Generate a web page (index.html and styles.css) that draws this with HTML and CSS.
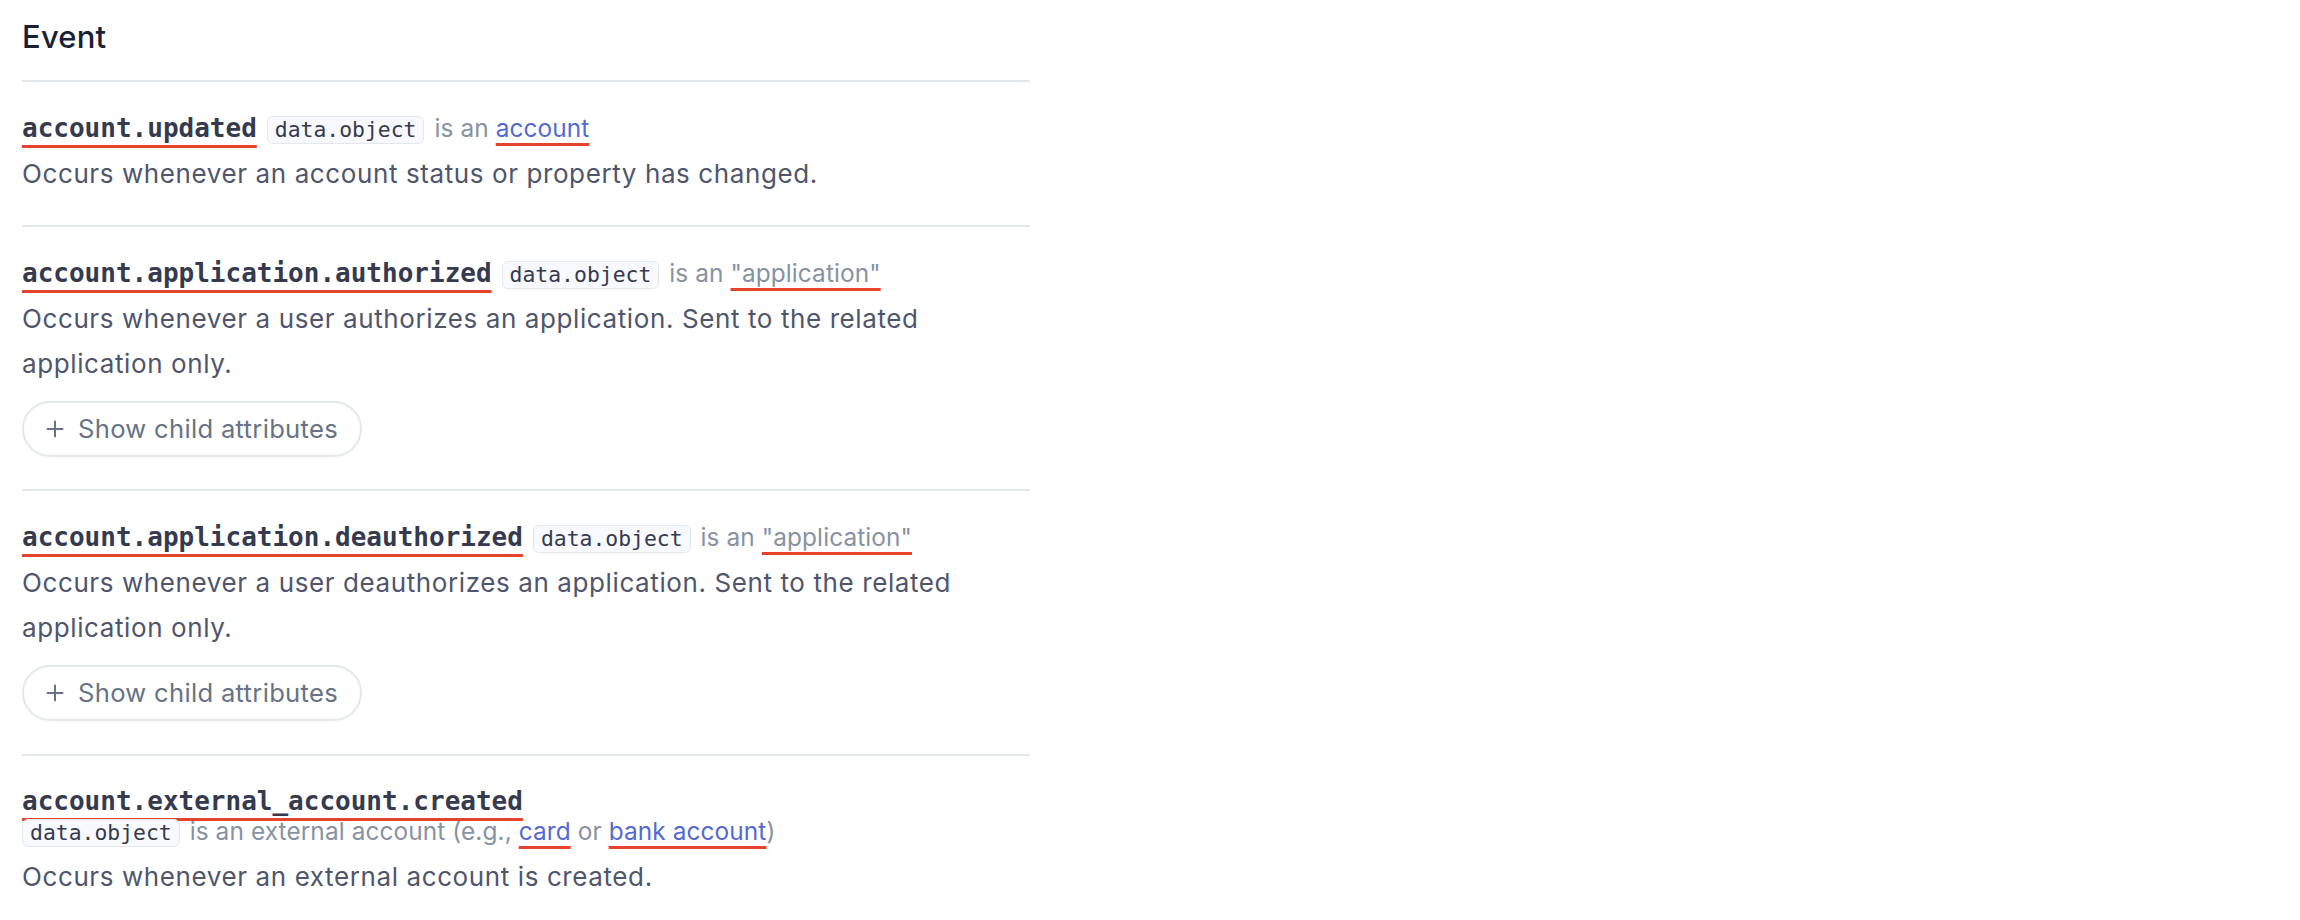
FILE: index.html
```html
<!DOCTYPE html>
<html lang="en">
<head>
<meta charset="utf-8">
<title>Event</title>
<link rel="stylesheet" href="styles.css">
</head>
<body>
<main class="page">
  <h3 class="title">Event</h3>

  <section class="event">
    <div class="event-head">
      <code class="event-name mark">account.updated</code>
      <code class="pill">data.object</code>
      <span class="meta">is an <a class="link mark" href="#">account</a></span>
    </div>
    <p class="desc">Occurs whenever an account status or property has changed.</p>
  </section>

  <section class="event">
    <div class="event-head">
      <code class="event-name mark">account.application.authorized</code>
      <code class="pill">data.object</code>
      <span class="meta">is an <span class="quoted mark">"application"</span></span>
    </div>
    <p class="desc">Occurs whenever a user authorizes an application. Sent to the related<br>application only.</p>
    <button class="child-btn" type="button">
      <svg class="plus" viewBox="0 0 18 18" width="18" height="18" aria-hidden="true"><path d="M9 1.5v15M1.5 9h15" fill="none" stroke="currentColor" stroke-width="2" stroke-linecap="round"/></svg>
      <span>Show child attributes</span>
    </button>
  </section>

  <section class="event">
    <div class="event-head">
      <code class="event-name mark">account.application.deauthorized</code>
      <code class="pill">data.object</code>
      <span class="meta">is an <span class="quoted mark">"application"</span></span>
    </div>
    <p class="desc">Occurs whenever a user deauthorizes an application. Sent to the related<br>application only.</p>
    <button class="child-btn" type="button">
      <svg class="plus" viewBox="0 0 18 18" width="18" height="18" aria-hidden="true"><path d="M9 1.5v15M1.5 9h15" fill="none" stroke="currentColor" stroke-width="2" stroke-linecap="round"/></svg>
      <span>Show child attributes</span>
    </button>
  </section>

  <section class="event">
    <div class="event-head">
      <code class="event-name mark">account.external_account.created</code>
      <span class="break"></span>
      <code class="pill">data.object</code>
      <span class="meta">is an external account (e.g., <a class="link mark" href="#">card</a> or <a class="link mark" href="#">bank account</a>)</span>
    </div>
    <p class="desc">Occurs whenever an external account is created.</p>
  </section>
</main>
</body>
</html>
```
FILE: styles.css
```css
html, body {
  margin: 0;
  padding: 0;
  background: #ffffff;
}

body {
  font-family: Inter, "Noto Sans", "Liberation Sans", sans-serif;
  color: #4f566b;
}

.page {
  width: 1008px;
  padding: 19px 0 0 22px;
}

.title {
  margin: 0 0 25px;
  font-size: 31px;
  line-height: 36px;
  font-weight: 500;
  color: #1a1f36;
  letter-spacing: 0.2px;
}

.event {
  border-top: 2px solid #e3e8ee;
  padding: 29.75px 0 28.7px;
}

.event-head {
  display: flex;
  flex-wrap: wrap;
  align-items: baseline;
  column-gap: 10px;
}

.break {
  flex-basis: 100%;
  height: 0;
}

.event-name {
  font-family: "DejaVu Sans Mono", "Liberation Mono", monospace;
  font-size: 26px;
  line-height: 32px;
  font-weight: 700;
  color: #353a4e;
}

.mark {
  text-decoration: underline;
  text-decoration-color: #e5432c;
  text-decoration-thickness: 3px;
  text-decoration-skip-ink: none;
}

.event-name.mark {
  text-underline-offset: 8px;
}

.pill {
  font-family: "DejaVu Sans Mono", "Liberation Mono", monospace;
  font-size: 21.4px;
  line-height: 24px;
  padding: 1px 7px;
  border: 1px solid #e3e8ee;
  border-radius: 6px;
  background: #f7f9fc;
  color: #353a4e;
}

.meta {
  font-size: 24.4px;
  line-height: 28px;
  letter-spacing: 0.1px;
  color: #8792a2;
}

.link {
  color: #5469d4;
}

.link.mark,
.quoted.mark {
  text-underline-offset: 6px;
}

.quoted {
  color: #8792a2;
}

.desc {
  margin: 8px 0 0;
  font-size: 26px;
  line-height: 44.8px;
  letter-spacing: 0.6px;
  color: #4f566b;
}

.child-btn {
  display: flex;
  align-items: center;
  gap: 14px;
  height: 56px;
  margin: 14px 0 4.2px;
  padding: 0 22px;
  border: 2px solid #e3e8ee;
  border-radius: 28px;
  background: #ffffff;
  font-family: Inter, "Noto Sans", "Liberation Sans", sans-serif;
  font-size: 25.6px;
  letter-spacing: 0.3px;
  color: #687385;
  cursor: pointer;
}

.plus {
  flex: none;
}
```
